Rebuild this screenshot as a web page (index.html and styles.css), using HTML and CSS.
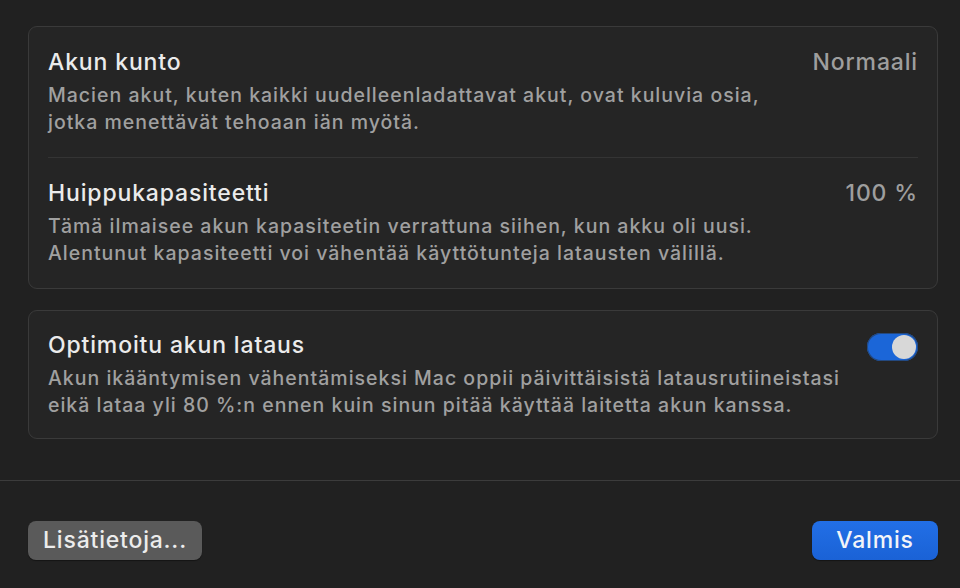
FILE: index.html
```html
<!DOCTYPE html>
<html lang="fi">
<head>
<meta charset="utf-8">
<title>Akun kunto</title>
<link rel="stylesheet" href="styles.css">
</head>
<body>
<main class="content">
  <section class="card">
    <div class="row">
      <div class="row-head">
        <span class="title">Akun kunto</span>
        <span class="value">Normaali</span>
      </div>
      <p class="desc">Macien akut, kuten kaikki uudelleenladattavat akut, ovat kuluvia osia,<br>jotka menettävät tehoaan iän myötä.</p>
    </div>
    <div class="divider"></div>
    <div class="row">
      <div class="row-head">
        <span class="title">Huippukapasiteetti</span>
        <span class="value">100 %</span>
      </div>
      <p class="desc">Tämä ilmaisee akun kapasiteetin verrattuna siihen, kun akku oli uusi.<br>Alentunut kapasiteetti voi vähentää käyttötunteja latausten välillä.</p>
    </div>
  </section>
  <section class="card card-toggle">
    <div class="row row-tight">
      <div class="row-head">
        <span class="title">Optimoitu akun lataus</span>
        <span class="switch"><span class="knob"></span></span>
      </div>
      <p class="desc">Akun ikääntymisen vähentämiseksi Mac oppii päivittäisistä latausrutiineistasi<br>eikä lataa yli 80 %:n ennen kuin sinun pitää käyttää laitetta akun kanssa.</p>
    </div>
  </section>
</main>
<footer class="footer">
  <button class="btn btn-secondary">Lisätietoja...</button>
  <button class="btn btn-primary">Valmis</button>
</footer>
</body>
</html>
```
FILE: styles.css
```css
* { box-sizing: border-box; }
html, body { margin: 0; padding: 0; }
body {
  width: 960px;
  height: 588px;
  background: #212121;
  font-family: Inter, "Noto Sans", sans-serif;
  color: #e6e6e6;
  display: flex;
  flex-direction: column;
  overflow: hidden;
}
.content {
  padding: 26px 22px 0 28px;
  display: flex;
  flex-direction: column;
  gap: 21px;
}
.card {
  background: #252525;
  border: 1px solid #3a3a3a;
  border-radius: 9px;
}
.row {
  padding: 21px 19px 21px 19px;
}
.row-tight {
  padding: 20px 19px 19px 19px;
}
.row-head {
  display: flex;
  justify-content: space-between;
  align-items: flex-start;
  height: 28px;
}
.title {
  font-size: 23px;
  font-weight: 500;
  line-height: 28px;
  letter-spacing: 0.85px;
  color: #ebebeb;
}
.value {
  font-size: 23px;
  font-weight: 500;
  line-height: 28px;
  letter-spacing: 0.85px;
  color: #9e9e9e;
}
.desc {
  margin: 6px 0 0 0;
  font-size: 19.5px;
  font-weight: 500;
  line-height: 27px;
  letter-spacing: 1px;
  color: #a0a0a0;
}
.divider {
  height: 1px;
  background: #343434;
  margin: 0 19px;
}
.switch {
  width: 51px;
  height: 28px;
  border-radius: 14px;
  background: #1b66d8;
  box-shadow: 0 0 0 1px #24497f inset;
  display: flex;
  align-items: center;
  justify-content: flex-end;
  padding: 2px;
  margin-top: 2px;
  flex-shrink: 0;
}
.knob {
  width: 24px;
  height: 24px;
  border-radius: 50%;
  background: #d8d8d8;
}
.footer {
  margin-top: 41px;
  border-top: 1px solid #3c3c3c;
  padding: 40px 22px 0 28px;
  display: flex;
  justify-content: space-between;
}
.btn {
  height: 39px;
  border-radius: 8px;
  font-family: Inter, "Noto Sans", sans-serif;
  font-size: 23px;
  font-weight: 500;
  line-height: 39px;
  letter-spacing: 0.8px;
  padding: 0;
  border: none;
  color: #ececec;
}
.btn-secondary {
  width: 174px;
  background: #5a5a5a;
  box-shadow: 0 1px 1px rgba(0,0,0,0.4);
}
.btn-primary {
  width: 126px;
  background: linear-gradient(#226fe6, #1a62d6);
  box-shadow: 0 1px 1px rgba(0,0,0,0.4);
  color: #f2f4f8;
}
```
